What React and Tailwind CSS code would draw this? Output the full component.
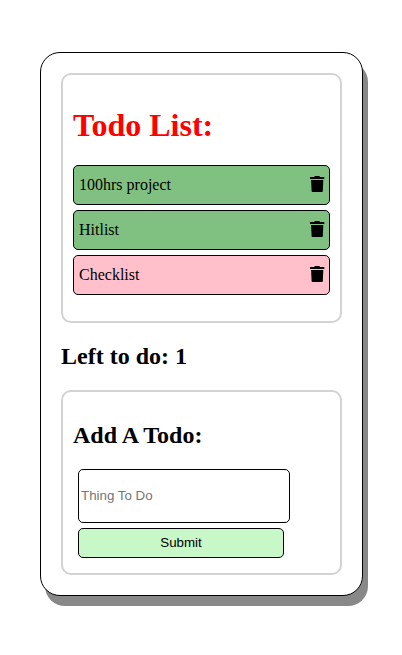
const todos = [
  { text: "100hrs project", done: true },
  { text: "Hitlist", done: true },
  { text: "Checklist", done: false },
];

function TrashIcon() {
  return (
    <svg viewBox="0 0 14 16" className="mb-0.5 h-4 w-3.5 overflow-visible" fill="currentColor" aria-hidden="true">
      <path d="M4.8 0H9.4L10 1H14.3V3H0V1H4.2Z" />
      <path d="M1.1 4H13.3L12.8 15.2Q12.7 16 12 16H2.4Q1.7 16 1.6 15.2Z" />
    </svg>
  );
}

function TodoItem({ text, done }) {
  return (
    <li
      className={`flex h-10 items-center justify-between rounded-[5px] border border-black px-[5px] ${
        done ? "bg-[#80c080]" : "bg-[#ffc0cb]"
      }`}
    >
      <span className="text-base leading-[18px]">{text}</span>
      <TrashIcon />
    </li>
  );
}

export default function App() {
  const left = todos.filter((todo) => !todo.done).length;

  return (
    <div className="h-[655px] w-[402px] bg-white px-10 pt-[52px] font-['Liberation_Serif',serif] text-black">
      <main className="h-[544px] w-[323px] rounded-[20px] border border-black bg-white p-5 shadow-[5px_10px_#888888]">
        <section className="h-[250px] rounded-[10px] border-2 border-[#d3d3d3] px-2.5 pt-8">
          <h1 className="text-[32px] leading-[37px] font-bold text-[#ff0000]">Todo List:</h1>
          <ul className="mt-[21px] flex flex-col gap-[5px]">
            {todos.map((todo) => (
              <TodoItem key={todo.text} {...todo} />
            ))}
          </ul>
        </section>
        <h2 className="my-5 text-2xl leading-[27px] font-bold">
          Left to do: {left}
        </h2>
        <section className="h-[185px] rounded-[10px] border-2 border-[#d3d3d3] px-2.5 pt-[30px]">
          <h2 className="text-2xl leading-[27px] font-bold">Add A Todo:</h2>
          <form
            className="mt-5 ml-[5px] flex flex-col gap-[5px] font-['Liberation_Sans',sans-serif] text-[13.333px]"
            onSubmit={(event) => event.preventDefault()}
          >
            <input
              type="text"
              placeholder="Thing To Do"
              className="h-[54px] w-[212px] rounded-[5px] border border-black bg-white px-0.5 pb-0.5 placeholder:text-[#757575]"
            />
            <button
              type="submit"
              className="h-[30px] w-[206px] rounded-[5px] border border-black bg-[#c8f7c8] pb-0.5 leading-[15px]"
            >
              Submit
            </button>
          </form>
        </section>
      </main>
    </div>
  );
}
